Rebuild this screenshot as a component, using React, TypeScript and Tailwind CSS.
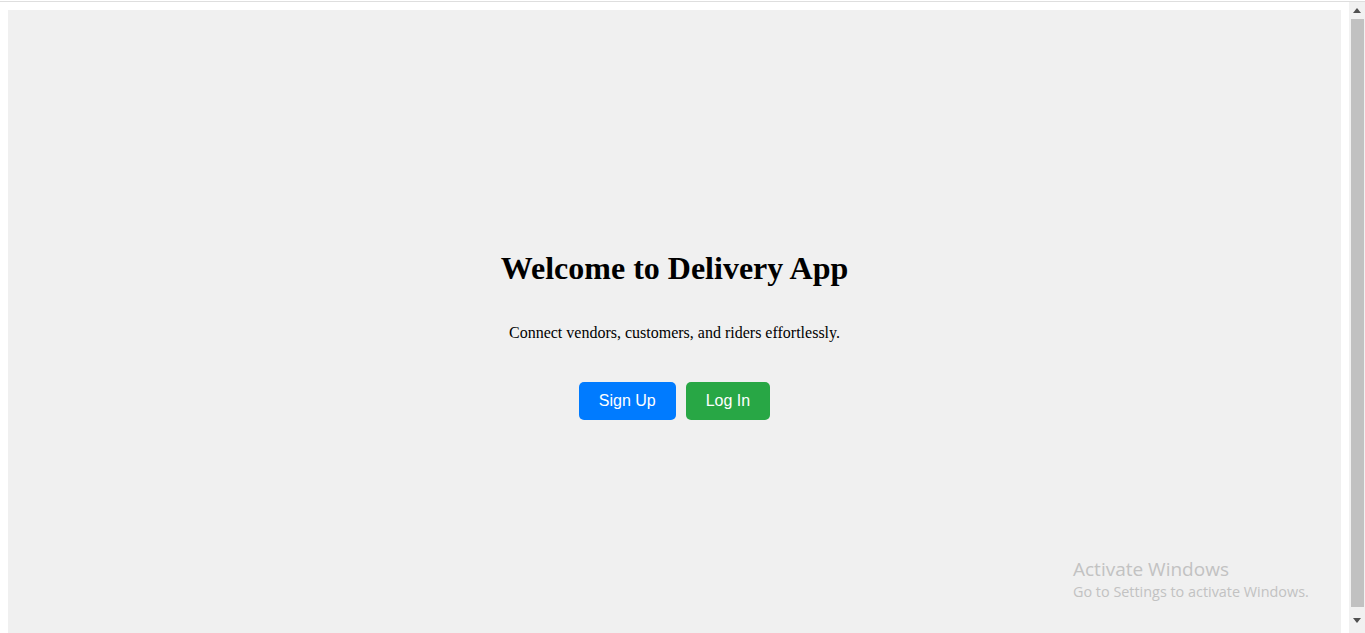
import React from "react";

export default function App() {
  return (
    <div className="h-[633px] w-[1365px] overflow-hidden bg-white flex flex-col relative">
      <div className="h-px mt-px bg-[#dedede] shrink-0" />
      <div className="flex flex-1 min-h-0">
        <div className="flex-1 px-2 pt-2">
          <div className="h-[633px] bg-[#f0f0f0] flex flex-col items-center justify-center text-black">
            <h1 className="text-[32px] font-bold leading-[37px] my-[21px] font-['Liberation_Serif',serif]">
              Welcome to Delivery App
            </h1>
            <p className="text-[16px] leading-[18px] my-4 font-['Liberation_Serif',serif]">
              Connect vendors, customers, and riders effortlessly.
            </p>
            <div className="flex gap-[10px] mt-6 mb-1 font-['Liberation_Sans',Arial,sans-serif]">
              <button className="h-[38px] px-5 rounded-[5px] bg-[#007bff] text-white text-[16px]">
                Sign Up
              </button>
              <button className="h-[38px] px-5 rounded-[5px] bg-[#28a745] text-white text-[16px]">
                Log In
              </button>
            </div>
          </div>
        </div>
        <div className="w-4 bg-[#f1f1f1] flex flex-col items-center shrink-0">
          <div className="h-4 flex items-center justify-center">
            <svg width="8" height="5" viewBox="0 0 8 5"><path d="M0 5 L4 0 L8 5 Z" fill="#505050" /></svg>
          </div>
          <div className="w-[13px] flex-1 bg-[#c1c1c1] mt-px" />
          <div className="h-[26px] flex items-center justify-center">
            <svg width="8" height="5" viewBox="0 0 8 5"><path d="M0 0 L8 0 L4 5 Z" fill="#505050" /></svg>
          </div>
        </div>
      </div>
      <div className="absolute left-[1073px] top-[557px] text-[#c2c2c2] font-['Open_Sans','Noto_Sans',sans-serif]">
        <div className="text-[19px] leading-[24px]">Activate Windows</div>
        <div className="text-[14.4px] leading-[21px]">Go to Settings to activate Windows.</div>
      </div>
    </div>
  );
}
